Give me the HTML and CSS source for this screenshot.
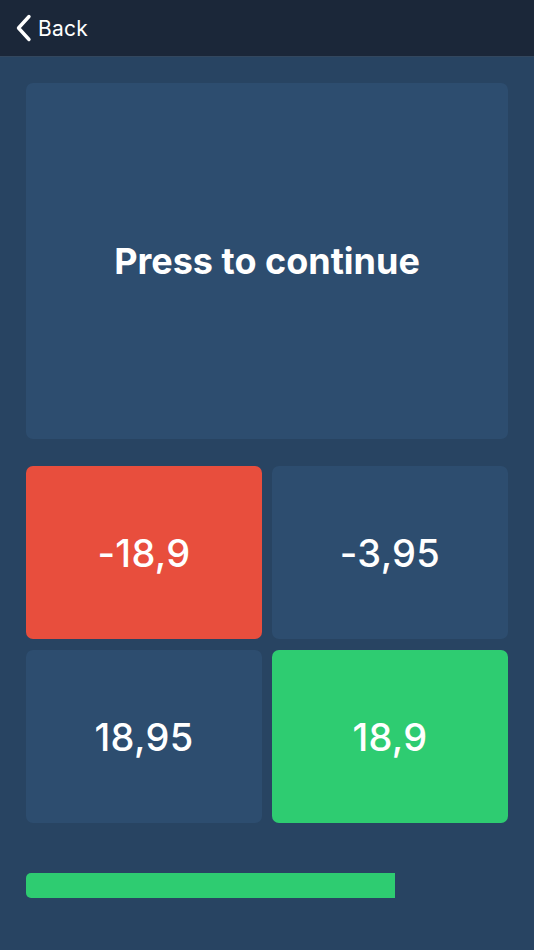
FILE: index.html
```html
<!DOCTYPE html>
<html>
<head>
<meta charset="utf-8">
<link rel="stylesheet" href="styles.css">
</head>
<body>
<header class="nav">
  <a class="back">
    <svg class="chev" width="17" height="28" viewBox="0 0 17 28"><polyline points="14,2.5 3.5,14 14,25.5" fill="none" stroke="#ffffff" stroke-width="3.4" stroke-linecap="round" stroke-linejoin="round"/></svg>
    <span>Back</span>
  </a>
</header>
<main class="content">
  <div class="prompt">Press to continue</div>
  <div class="answers">
    <div class="answer wrong">-18,9</div>
    <div class="answer">-3,95</div>
    <div class="answer">18,95</div>
    <div class="answer right">18,9</div>
  </div>
  <div class="progress"><div class="fill" style="width:369px"></div></div>
</main>
</body>
</html>
```
FILE: styles.css
```css
html, body {
  margin: 0;
  padding: 0;
}
body {
  width: 534px;
  height: 950px;
  background: #284462;
  font-family: Inter, "Noto Sans", "Liberation Sans", sans-serif;
  color: #ffffff;
  overflow: hidden;
}
.nav {
  height: 56px;
  background: #1b2739;
  border-bottom: 1px solid #33475e;
  display: flex;
  align-items: center;
  padding-left: 15px;
}
.back {
  display: flex;
  align-items: center;
  gap: 6px;
  font-size: 21px;
  letter-spacing: 0.2px;
}
.chev {
  display: block;
  margin-top: -1px;
}
.content {
  padding: 26px 26px 0 26px;
}
.prompt {
  height: 356px;
  background: #2d4d6f;
  border-radius: 7px;
  display: flex;
  align-items: center;
  justify-content: center;
  font-size: 36px;
  font-weight: 700;
  letter-spacing: 0;
}
.answers {
  margin-top: 27px;
  display: grid;
  grid-template-columns: 1fr 1fr;
  grid-template-rows: 173px 173px;
  column-gap: 10px;
  row-gap: 11px;
}
.answer {
  background: #2d4d6f;
  border-radius: 7px;
  display: flex;
  align-items: center;
  justify-content: center;
  font-size: 38px;
  font-weight: 500;
  letter-spacing: 0.3px;
}
.answer.wrong {
  background: #e84e3d;
}
.answer.right {
  background: #2ecc71;
}
.progress {
  margin-top: 50px;
  height: 25px;
}
.fill {
  height: 100%;
  background: #2ecc71;
  border-radius: 5px 0 0 5px;
}
```
